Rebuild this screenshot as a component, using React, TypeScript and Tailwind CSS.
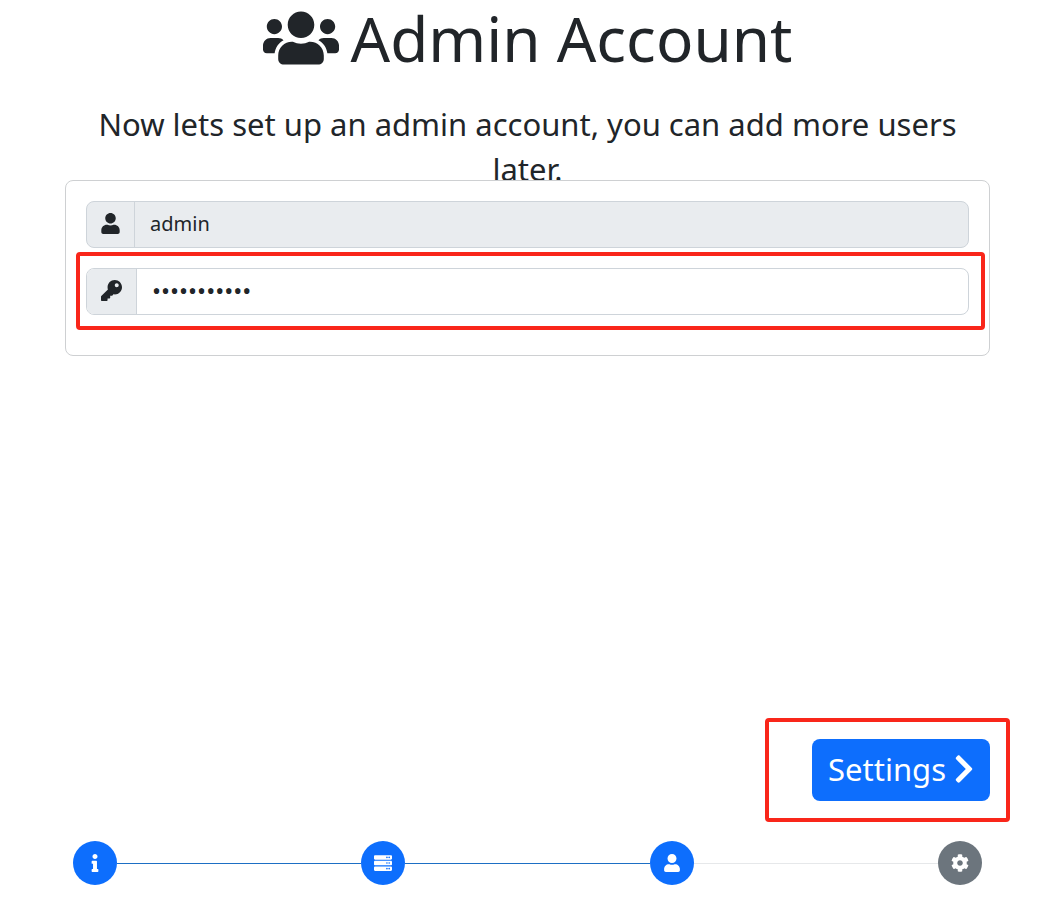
import { useState } from "react";
import type { ReactNode } from "react";
import {
  FaUsers,
  FaUser,
  FaKey,
  FaChevronRight,
  FaInfo,
  FaServer,
  FaCog,
} from "react-icons/fa";

function Highlight({ className }: { className: string }) {
  return (
    <div
      aria-hidden="true"
      className={`pointer-events-none absolute rounded-[4px] border-4 border-[#f9261a] ${className}`}
    />
  );
}

function Step({ label, active, children }: { label: string; active: boolean; children: ReactNode }) {
  return (
    <button
      type="button"
      aria-label={label}
      className={`flex size-11 shrink-0 items-center justify-center rounded-full text-lg text-white ${
        active ? "bg-[#0d6efd]" : "bg-[#6c757d]"
      }`}
    >
      {children}
    </button>
  );
}

function StepLine({ done }: { done: boolean }) {
  return <div className={`h-px flex-1 ${done ? "bg-[#1d6fc4]" : "bg-[#e6e8ea]"}`} />;
}

export default function App() {
  const [password, setPassword] = useState("adminadmin1");

  return (
    <main className="flex min-h-screen flex-col bg-white pr-[71px] pb-[34px] pl-[65px] font-['Noto_Sans','Open_Sans',sans-serif] text-[#212529]">
      <header className="text-center">
        <h1 className="flex items-center justify-center gap-3 text-[62px] leading-[76px]">
          <FaUsers className="size-[76px]" />
          Admin Account
        </h1>
        <p className="mt-[26px] px-6 text-[31px] leading-[45px]">
          Now lets set up an admin account, you can add more users later.
        </p>
      </header>

      <form className="relative -mt-3 rounded-[8px] border border-[#ced0d2] bg-white px-5 pt-5 pb-10">
        <div className="flex h-[47px] overflow-hidden rounded-[8px] border border-[#ced4da] bg-[#e9ecef]">
          <label
            htmlFor="username"
            className="flex w-12 shrink-0 items-center justify-center border-r border-[#ced4da] pb-0.5 text-[21px]"
          >
            <FaUser aria-label="Username" />
          </label>
          <input
            id="username"
            type="text"
            value="admin"
            disabled
            className="min-w-0 flex-1 px-[15px] pb-0.5 text-[20px] text-[#212529]"
          />
        </div>

        <div className="relative mt-5">
          <div className="flex h-[47px] overflow-hidden rounded-[8px] border border-[#ced4da]">
            <label
              htmlFor="password"
              className="flex w-[50px] shrink-0 items-center justify-center border-r border-[#ced4da] bg-[#e9ecef] pb-0.5 text-[21px]"
            >
              <FaKey aria-label="Password" />
            </label>
            <input
              id="password"
              type="password"
              value={password}
              onChange={(event) => setPassword(event.target.value)}
              className="min-w-0 flex-1 px-[15px] pb-0.5 text-[24px]"
            />
          </div>
          <Highlight className="-top-4 -right-4 -bottom-[15px] -left-2.5" />
        </div>
      </form>

      <div className="mt-auto flex justify-end">
        <div className="relative">
          <button
            type="button"
            className="flex h-[62px] items-center gap-2 rounded-[8px] bg-[#0d6efd] px-4 pb-0.5 text-[31px] text-white"
          >
            Settings
            <FaChevronRight className="h-8 w-5" />
          </button>
          <Highlight className="-top-[21px] -right-5 -bottom-[21px] -left-[47px]" />
        </div>
      </div>

      <nav aria-label="Setup steps" className="mt-10 flex items-center px-2">
        <Step label="Introduction" active>
          <FaInfo />
        </Step>
        <StepLine done />
        <Step label="Server" active>
          <FaServer />
        </Step>
        <StepLine done />
        <Step label="Admin account" active>
          <FaUser />
        </Step>
        <StepLine done={false} />
        <Step label="Settings" active={false}>
          <FaCog />
        </Step>
      </nav>
    </main>
  );
}
